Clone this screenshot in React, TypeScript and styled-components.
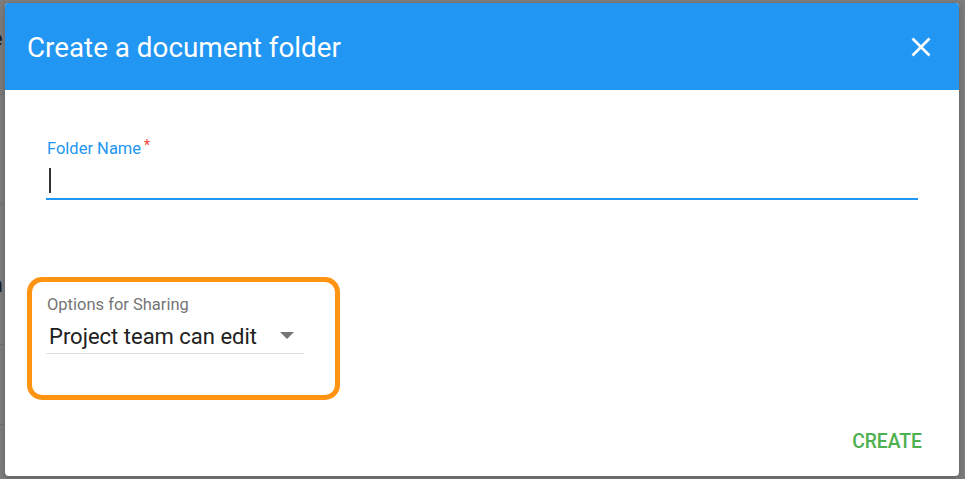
import React from "react";
import styled, { createGlobalStyle } from "styled-components";

const Global = createGlobalStyle`
  html, body { margin: 0; padding: 0; }
  body {
    background: #7d7d7d;
    font-family: Roboto, "Noto Sans", "Liberation Sans", sans-serif;
    width: 965px;
    height: 479px;
    overflow: hidden;
  }
`;

const Backdrop = styled.div`
  position: relative;
  width: 965px;
  height: 479px;
  padding: 3px 6px 3px 5px;
  box-sizing: border-box;
`;

const PageBehind = styled.div`
  position: absolute;
  left: 0;
  top: 0;
  width: 5px;
  height: 479px;
  overflow: hidden;
`;

const BehindLine = styled.div<{ $top: number }>`
  position: absolute;
  left: 0;
  width: 5px;
  top: ${(p) => p.$top}px;
  height: 1px;
  background: #6c6c6c;
`;

const BehindChar = styled.span<{ $top: number }>`
  position: absolute;
  left: -9px;
  top: ${(p) => p.$top}px;
  font-size: 22px;
  color: #1a1a1a;
  line-height: 1;
`;

const Dialog = styled.div`
  width: 954px;
  height: 473px;
  background: #fff;
  border-radius: 4px;
  overflow: hidden;
  display: flex;
  flex-direction: column;
  box-shadow: 0 2px 6px rgba(0, 0, 0, 0.25);
`;

const Header = styled.div`
  height: 87px;
  background: #2196f3;
  display: flex;
  align-items: center;
  justify-content: space-between;
  padding: 0 23px 0 22px;
  flex-shrink: 0;
`;

const Title = styled.h2`
  margin: 0;
  font-size: 27.8px;
  font-weight: 400;
  color: #fff;
  line-height: 32px;
  padding-top: 2px;
`;

const CloseButton = styled.button`
  border: 0;
  background: transparent;
  padding: 0;
  width: 30px;
  height: 30px;
  display: flex;
  align-items: center;
  justify-content: center;
  cursor: pointer;
`;

const Body = styled.div`
  flex: 1;
  display: flex;
  flex-direction: column;
  padding: 46px 41px 0 41px;
`;

const Label = styled.label<{ $active?: boolean }>`
  display: block;
  font-size: 16.5px;
  line-height: 19px;
  padding-left: 1px;
  color: ${(p) => (p.$active ? "#2196f3" : "#757575")};
`;

const Required = styled.span`
  color: #f44336;
  margin-left: 3px;
  font-size: 14px;
  vertical-align: 4px;
`;

const InputArea = styled.div`
  height: 42px;
  border-bottom: 2px solid #2196f3;
  display: flex;
  align-items: flex-start;
  padding: 10px 0 0 3px;
  box-sizing: border-box;
`;

const Caret = styled.div`
  width: 1.6px;
  height: 25px;
  background: #333;
`;

const Highlight = styled.div`
  margin: 77px 0 0 -19px;
  width: 313px;
  height: 123px;
  box-sizing: border-box;
  border: 5px solid #ff9312;
  border-radius: 15px;
  padding: 13px 0 0 14px;
`;

const SelectRow = styled.div`
  width: 258px;
  height: 30px;
  margin-top: 10px;
  border-bottom: 1px solid #e0e0e0;
  display: flex;
  align-items: flex-start;
  justify-content: space-between;
  box-sizing: border-box;
  padding: 0 10px 0 3px;
`;

const SelectValue = styled.span`
  font-size: 22px;
  line-height: 26px;
  color: #212121;
`;

const Arrow = styled.span`
  width: 0;
  height: 0;
  margin-top: 8px;
  border-left: 7px solid transparent;
  border-right: 7px solid transparent;
  border-top: 7px solid #757575;
`;

const Footer = styled.div`
  margin-top: auto;
  display: flex;
  justify-content: flex-end;
  padding: 0 37px 22px 0;
`;

const ActionButton = styled.button`
  border: 0;
  background: transparent;
  font-family: inherit;
  font-size: 19.3px;
  font-weight: 500;
  color: #4caf50;
  padding: 0;
  line-height: 24px;
  cursor: pointer;
`;

export default function App() {
  return (
    <>
      <Global />
      <Backdrop>
        <PageBehind>
          <BehindChar $top={28}>e</BehindChar>
          <BehindLine $top={94} />
          <BehindLine $top={204} />
          <BehindChar $top={274}>a</BehindChar>
          <BehindLine $top={344} />
          <BehindLine $top={424} />
        </PageBehind>
        <Dialog>
          <Header>
            <Title>Create a document folder</Title>
            <CloseButton aria-label="Close">
              <svg width="20" height="20" viewBox="0 0 20 20">
                <path d="M1.5 1.5 L18.5 18.5 M18.5 1.5 L1.5 18.5" stroke="#fff" strokeWidth="2.6" strokeLinecap="butt" />
              </svg>
            </CloseButton>
          </Header>
          <Body>
            <Label $active>
              Folder Name<Required>*</Required>
            </Label>
            <InputArea>
              <Caret />
            </InputArea>
            <Highlight>
              <Label>Options for Sharing</Label>
              <SelectRow>
                <SelectValue>Project team can edit</SelectValue>
                <Arrow />
              </SelectRow>
            </Highlight>
          </Body>
          <Footer>
            <ActionButton>CREATE</ActionButton>
          </Footer>
        </Dialog>
      </Backdrop>
    </>
  );
}
